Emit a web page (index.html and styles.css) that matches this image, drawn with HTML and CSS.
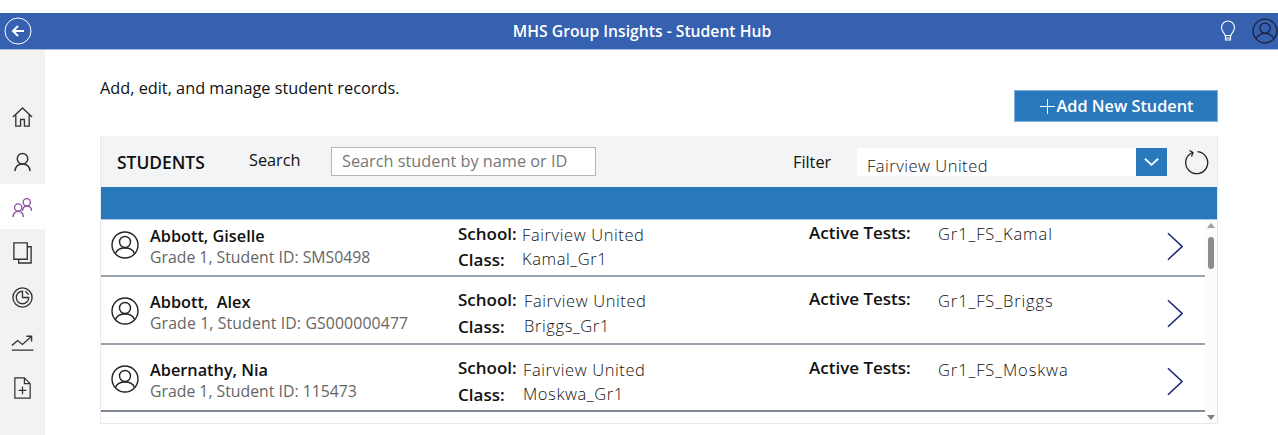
FILE: index.html
```html
<!DOCTYPE html>
<html lang="en">
<head>
    <meta charset="UTF-8">
    <title>Student Hub</title>
    <link rel="stylesheet" href="styles.css">
</head>
<body>

<div class="topbar">
    <svg class="back-icon" viewBox="0 0 28 28">
        <circle cx="14" cy="14" r="13" fill="none" stroke="#fff" stroke-width="1"/>
        <path d="M20 14H9M14 9l-5 5 5 5" fill="none" stroke="#fff" stroke-width="2"/>
    </svg>
    <h1>MHS Group Insights - Student Hub</h1>
    <svg class="bulb-icon" viewBox="0 0 16 22">
        <path d="M5 15.500C4.500 12.500 1.500 11.500 1.500 7.500a6.500 6.500 0 0 1 13 0c0 4-3 5-3.500 8zM5.500 15.500v4.500h5v-4.500M5.500 18h5" fill="none" stroke="#fff" stroke-width="1.100"/>
    </svg>
    <svg class="user-icon" viewBox="0 0 28 28">
        <circle cx="14" cy="14" r="12.800" fill="none" stroke="#1c2233" stroke-width="1.400"/>
        <circle cx="14" cy="11" r="5.500" fill="none" stroke="#1c2233" stroke-width="1.400"/>
        <path d="M4.500 22.500c1.500-4 5-6 9.500-6s8 2 9.500 6" fill="none" stroke="#1c2233" stroke-width="1.400"/>
    </svg>
</div>

<div class="page">
    <div class="sidebar">
        <div class="nav-item">
            <svg viewBox="0 0 24 24"><path d="M2 10.500 12 1 22 10.500M5 8V20h5v-7h4v7h5V8" fill="none" stroke="#333" stroke-width="1.400"/></svg>
        </div>
        <div class="nav-item">
            <svg viewBox="0 0 24 24"><circle cx="12" cy="7" r="5.500" fill="none" stroke="#333" stroke-width="1.500"/><path d="M4 20c.5-5 3.500-7.500 8-7.500s7.500 2.500 8 7.500" fill="none" stroke="#333" stroke-width="1.500"/></svg>
        </div>
        <div class="nav-item active">
            <svg viewBox="0 0 24 24"><circle cx="16.500" cy="6.500" r="3.800" fill="none" stroke="#8f4f9b" stroke-width="1.400"/><path d="M12 15.500c.3-3 2-5 4.500-5s4.800 1.500 5 5" fill="none" stroke="#8f4f9b" stroke-width="1.400"/><circle cx="7.500" cy="12" r="3.800" fill="none" stroke="#8f4f9b" stroke-width="1.400"/><path d="M2 22c.3-3.500 2.500-6 5.500-6s5.200 2.500 5.500 6" fill="none" stroke="#8f4f9b" stroke-width="1.400"/></svg>
        </div>
        <div class="nav-item">
            <svg viewBox="0 0 24 24"><path d="M3 2h14v17H3zM17 6h4v17H8v-4" fill="none" stroke="#333" stroke-width="1.400"/></svg>
        </div>
        <div class="nav-item">
            <svg viewBox="0 0 24 24"><circle cx="12" cy="12" r="10" fill="none" stroke="#333" stroke-width="1.400"/><path d="M12 5.500a6.500 6.500 0 1 0 6.500 6.500H12z" fill="none" stroke="#333" stroke-width="1.400"/><path d="M15 5.500l3.500 3.500" stroke="#333" stroke-width="1.400"/></svg>
        </div>
        <div class="nav-item">
            <svg viewBox="0 0 24 24"><path d="M1 20h22.500M1 15l6-5 5 4 9-8M16 5.500h5.500V11" fill="none" stroke="#333" stroke-width="1.400"/></svg>
        </div>
        <div class="nav-item">
            <svg viewBox="0 0 24 24"><path d="M4 2h10l6 6v15H4zM14 2v6h6M12 11v8M8 15h8" fill="none" stroke="#333" stroke-width="1.300"/></svg>
        </div>
    </div>

    <div class="main">
        <div class="main-head">
            <p class="intro">Add, edit, and manage student records.</p>
            <button class="add-btn"><span class="plus"></span>Add New Student</button>
        </div>

        <div class="panel">
            <div class="toolbar">
                <span class="panel-title">STUDENTS</span>
                <span class="search-label">Search</span>
                <input class="search" type="text" placeholder="Search student by name or ID">
                <span class="filter-label">Filter</span>
                <div class="filter">
                    <span class="filter-value">Fairview United</span>
                    <span class="filter-btn">
                        <svg viewBox="0 0 18 10"><path d="M2 1.500l7 6.500 7-6.500" fill="none" stroke="#fff" stroke-width="2"/></svg>
                    </span>
                </div>
                <svg class="refresh" viewBox="0 0 26 26">
                    <path d="M8.500 3.500a11 11 0 1 0 5-.8M5.500 1.500l3.500 2-1.500 4" fill="none" stroke="#222" stroke-width="1.300"/>
                </svg>
            </div>
            <div class="strip"></div>

            <div class="list">
                <div class="rows">
                    <div class="row row-first">
                        <svg class="avatar" viewBox="0 0 28 28"><circle cx="14" cy="14" r="13" fill="none" stroke="#222" stroke-width="1.400"/><circle cx="14" cy="11" r="5.500" fill="none" stroke="#222" stroke-width="1.400"/><path d="M4.500 22.500c1.500-4 5-5.500 9.500-5.500s8 1.500 9.500 5.500" fill="none" stroke="#222" stroke-width="1.400"/></svg>
                        <div class="student">
                            <div class="name">Abbott, Giselle</div>
                            <div class="sub">Grade 1, Student ID: SMS0498</div>
                        </div>
                        <div class="details">
                            <div class="line"><b>School:</b><span class="val val-a">Fairview United</span></div>
                            <div class="line"><b>Class:</b><span class="val val-a">Kamal_Gr1</span></div>
                        </div>
                        <div class="tests"><b>Active Tests:</b><span class="val">Gr1_FS_Kamal</span></div>
                        <svg class="chevron" viewBox="0 0 17 30"><path d="M1 1l15 14L1 29" fill="none" stroke="#1a2375" stroke-width="1.600"/></svg>
                    </div>
                    <div class="row row-second">
                        <svg class="avatar" viewBox="0 0 28 28"><circle cx="14" cy="14" r="13" fill="none" stroke="#222" stroke-width="1.400"/><circle cx="14" cy="11" r="5.500" fill="none" stroke="#222" stroke-width="1.400"/><path d="M4.500 22.500c1.500-4 5-5.500 9.500-5.500s8 1.500 9.500 5.500" fill="none" stroke="#222" stroke-width="1.400"/></svg>
                        <div class="student">
                            <div class="name">Abbott,&nbsp; Alex</div>
                            <div class="sub sub-long">Grade 1, Student ID: GS000000477</div>
                        </div>
                        <div class="details">
                            <div class="line"><b>School:</b><span class="val val-b">Fairview United</span></div>
                            <div class="line"><b>Class:</b><span class="val val-b">Briggs_Gr1</span></div>
                        </div>
                        <div class="tests"><b>Active Tests:</b><span class="val">Gr1_FS_Briggs</span></div>
                        <svg class="chevron" viewBox="0 0 17 30"><path d="M1 1l15 14L1 29" fill="none" stroke="#1a2375" stroke-width="1.600"/></svg>
                    </div>
                    <div class="row row-third">
                        <svg class="avatar" viewBox="0 0 28 28"><circle cx="14" cy="14" r="13" fill="none" stroke="#222" stroke-width="1.400"/><circle cx="14" cy="11" r="5.500" fill="none" stroke="#222" stroke-width="1.400"/><path d="M4.500 22.500c1.500-4 5-5.500 9.500-5.500s8 1.500 9.500 5.500" fill="none" stroke="#222" stroke-width="1.400"/></svg>
                        <div class="student">
                            <div class="name">Abernathy, Nia</div>
                            <div class="sub">Grade 1, Student ID: 115473</div>
                        </div>
                        <div class="details">
                            <div class="line"><b>School:</b><span class="val val-c">Fairview United</span></div>
                            <div class="line"><b>Class:</b><span class="val val-c">Moskwa_Gr1</span></div>
                        </div>
                        <div class="tests"><b>Active Tests:</b><span class="val">Gr1_FS_Moskwa</span></div>
                        <svg class="chevron" viewBox="0 0 17 30"><path d="M1 1l15 14L1 29" fill="none" stroke="#1a2375" stroke-width="1.600"/></svg>
                    </div>
                </div>
                <div class="scrollbar">
                    <span class="arrow-up"></span>
                    <span class="thumb"></span>
                    <span class="arrow-down"></span>
                </div>
            </div>
        </div>
    </div>
</div>

</body>
</html>
```

FILE: styles.css
```css
* {
    box-sizing: border-box;
    font-family: "Open Sans", sans-serif;
}

body {
    margin: 0;
    height: 435px;
    overflow: hidden;
    background: white;
    padding-top: 13px;
    color: #111;
}

.topbar {
    height: 37px;
    background-color: #3660b0;
    border-bottom: 1px solid #a9bde0;
    display: flex;
    align-items: center;
    padding: 0 0 0 4px;
}

.topbar h1 {
    flex: 1;
    margin: 0;
    padding-left: 32px;
    text-align: center;
    font-size: 15.700px;
    font-weight: 600;
    color: white;
}

.back-icon {
    width: 28px;
    height: 28px;
}

.bulb-icon {
    width: 16px;
    height: 22px;
    margin-right: 16px;
}

.user-icon {
    width: 26px;
    height: 26px;
}

.page {
    display: flex;
    height: 385px;
}

.sidebar {
    width: 45px;
    background-color: #f3f2f1;
    padding-top: 44.500px;
    display: flex;
    flex-direction: column;
}

.nav-item {
    height: 44.800px;
    padding-top: 3px;
    display: flex;
    align-items: center;
    justify-content: center;
}

.nav-item svg {
    width: 23px;
    height: 23px;
}

.nav-item.active {
    background: white;
}

.main {
    flex: 1;
    padding: 0 60px 0 55px;
}

.main-head {
    height: 86px;
    display: flex;
    justify-content: space-between;
}

.intro {
    margin: 27px 0 0;
    font-size: 16.300px;
    line-height: 22px;
}

.add-btn {
    width: 204px;
    height: 32px;
    margin-top: 40px;
    border: 1px solid #7fb0de;
    background-color: #2a78bc;
    color: white;
    font-size: 16.300px;
    font-weight: 600;
    display: flex;
    align-items: center;
    justify-content: center;
    padding: 0 0 0 1px;
}

.plus {
    width: 15px;
    height: 15px;
    margin-right: 2px;
    background:
        linear-gradient(white, white) center / 100% 1px no-repeat,
        linear-gradient(white, white) center / 1px 100% no-repeat;
}

.panel {
    height: 288px;
    border: 1px solid #e8e8e8;
    border-top: none;
    display: flex;
    flex-direction: column;
}

.toolbar {
    height: 51px;
    background-color: #f3f4f6;
    display: flex;
    align-items: center;
    flex-shrink: 0;
}

.panel-title {
    width: 132px;
    margin-left: 16px;
    font-size: 17.400px;
    font-weight: 600;
    color: #111;
}

.search-label {
    width: 82px;
    font-size: 16.300px;
    margin-top: -3px;
}

.search {
    width: 265px;
    height: 29px;
    margin-top: -1px;
    border: 1px solid #b5b5b5;
    background: white;
    padding: 0 10px;
    font-size: 16.300px;
    outline: none;
}

.search::placeholder {
    color: #777;
}

.filter-label {
    margin-left: 197px;
    width: 64px;
    font-size: 16.300px;
    padding-top: 1px;
}

.filter {
    width: 310px;
    height: 28px;
    background: white;
    display: flex;
    align-items: center;
    justify-content: space-between;
}

.filter-value {
    font-size: 16.500px;
    font-weight: 300;
    letter-spacing: 0.500px;
    padding: 8px 0 0 10px;
    color: #111;
}

.filter-btn {
    width: 31px;
    height: 28px;
    background-color: #2a78bc;
    display: flex;
    align-items: center;
    justify-content: center;
}

.filter-btn svg {
    width: 17px;
    height: 10px;
}

.refresh {
    width: 26px;
    height: 26px;
    margin-left: 17px;
}

.strip {
    height: 33px;
    background-color: #2a78bc;
    border-bottom: 1px solid #a9c9e6;
    flex-shrink: 0;
}

.list {
    flex: 1;
    display: flex;
    min-height: 0;
}

.rows {
    flex: 1;
}

.row {
    display: flex;
    border-bottom: 2px solid #98a3ad;
    position: relative;
}

.row-first {
    height: 57px;
}

.row-second {
    height: 68px;
}

.row-third {
    height: 67px;
    border-bottom-color: #7d8a96;
}

.avatar {
    width: 28px;
    height: 28px;
    margin: 20px 0 0 10px;
    flex-shrink: 0;
}

.row-first .avatar {
    margin-top: 11px;
}

.student {
    width: 308px;
    margin-left: 11px;
    padding-top: 7px;
}

.row-second .student,
.row-third .student {
    padding-top: 16px;
}

.name {
    font-size: 16.300px;
    font-weight: 600;
    line-height: 19px;
    color: #111;
}

.sub {
    font-size: 15.800px;
    line-height: 21px;
    margin-top: 1px;
    color: #666;
}

.sub-long {
    letter-spacing: 0.130px;
}

.details {
    width: 351px;
    padding-top: 4px;
}

.row-second .details,
.row-third .details {
    padding-top: 13px;
}

.line {
    display: flex;
    height: 26px;
    align-items: flex-start;
    line-height: 20px;
}

.row-second .line,
.row-third .line {
    height: 27px;
}

.line b,
.tests b {
    font-weight: 600;
    font-size: 17px;
}

.line b {
    width: 64px;
}

.val {
    font-weight: 300;
    font-size: 16.500px;
    letter-spacing: 0.600px;
    color: #111;
}

.val-a {
    margin-top: 1px;
}

.val-b {
    margin-left: 2px;
    margin-top: 1px;
}

.val-c {
    margin-left: 1px;
    margin-top: 2px;
}

.line + .line .val {
    margin-top: -1px;
}

.tests {
    width: 345px;
    display: flex;
    padding-top: 3px;
    line-height: 20px;
}

.row-second .tests {
    padding-top: 12px;
}

.row-third .tests {
    padding-top: 13px;
}

.tests b {
    width: 129px;
}

.tests .val {
    margin-top: 2px;
    letter-spacing: 0.900px;
}

.row-first .tests .val {
    margin-top: 1px;
}

.chevron {
    position: absolute;
    left: 1066px;
    top: 12px;
    width: 16px;
    height: 29px;
}

.row-second .chevron,
.row-third .chevron {
    top: 22px;
}

.scrollbar {
    width: 12px;
    background: #fbfbfb;
    display: flex;
    flex-direction: column;
    align-items: center;
}

.arrow-up {
    margin-top: 3px;
    border: 4px solid transparent;
    border-top: none;
    border-bottom: 5px solid #a0a0a0;
}

.thumb {
    width: 6px;
    height: 32px;
    margin-top: 9px;
    border-radius: 3px;
    background: #8c8c8c;
}

.arrow-down {
    margin-top: auto;
    margin-bottom: 3px;
    border: 4px solid transparent;
    border-bottom: none;
    border-top: 5px solid #808080;
}
```
